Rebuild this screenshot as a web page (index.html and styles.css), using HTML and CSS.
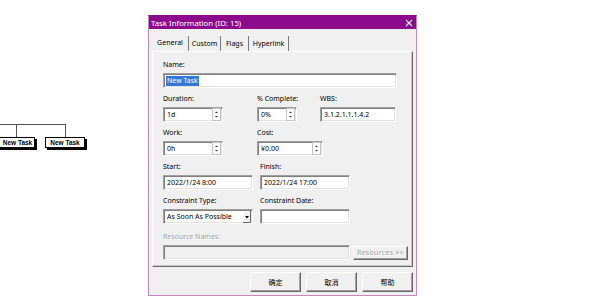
FILE: index.html
```html
<!DOCTYPE html>
<html>
<head>
<meta charset="utf-8">
<title>Task Information</title>
<link rel="stylesheet" href="styles.css">
</head>
<body>
<div class="org">
  <div class="hline"></div>
  <div class="nodes">
    <div class="node n1"><div class="vline"></div><div class="box">New Task</div></div>
    <div class="node n2"><div class="vline"></div><div class="box">New Task</div></div>
  </div>
</div>

<div class="dialog">
  <div class="titlebar">
    <span class="title">Task Information (ID: 15)</span>
    <svg class="close" width="8" height="8" viewBox="0 0 8 8"><path d="M1 1L7 7M7 1L1 7" stroke="#fff" stroke-width="1.1" fill="none"/></svg>
  </div>
  <div class="content">
    <div class="tabs">
      <div class="tab t1 active">General</div>
      <div class="tab t2">Custom</div>
      <div class="tab t3">Flags</div>
      <div class="tab t4">Hyperlink</div>
    </div>
    <div class="panel">
      <div class="fields">
        <div class="field">
          <label>Name:</label>
          <div class="input w234"><span class="sel">New Task</span></div>
        </div>

        <div class="row r-a">
          <div class="field">
            <label>Duration:</label>
            <div class="input w60"><span class="val">1d</span>
              <svg class="spinner" width="9" height="13" viewBox="0 0 9 13"><rect x="0.5" y="0.5" width="8" height="12" fill="#fcfcfc" stroke="#c4c4c4"/><path d="M3 5H6L4.5 3.5Z" fill="#333"/><path d="M3 8H6L4.5 9.5Z" fill="#333"/></svg>
            </div>
          </div>
          <div class="field">
            <label>% Complete:</label>
            <div class="input w40"><span class="val">0%</span>
              <svg class="spinner" width="9" height="13" viewBox="0 0 9 13"><rect x="0.5" y="0.5" width="8" height="12" fill="#fcfcfc" stroke="#c4c4c4"/><path d="M3 5H6L4.5 3.5Z" fill="#333"/><path d="M3 8H6L4.5 9.5Z" fill="#333"/></svg>
            </div>
          </div>
          <div class="field">
            <label>WBS:</label>
            <div class="input w76"><span class="val">3.1.2.1.1.1.4.2</span></div>
          </div>
        </div>

        <div class="row r-a">
          <div class="field">
            <label>Work:</label>
            <div class="input w60"><span class="val">0h</span>
              <svg class="spinner" width="9" height="13" viewBox="0 0 9 13"><rect x="0.5" y="0.5" width="8" height="12" fill="#fcfcfc" stroke="#c4c4c4"/><path d="M3 5H6L4.5 3.5Z" fill="#333"/><path d="M3 8H6L4.5 9.5Z" fill="#333"/></svg>
            </div>
          </div>
          <div class="field">
            <label>Cost:</label>
            <div class="input w65"><span class="val">¥0.00</span>
              <svg class="spinner" width="9" height="13" viewBox="0 0 9 13"><rect x="0.5" y="0.5" width="8" height="12" fill="#fcfcfc" stroke="#c4c4c4"/><path d="M3 5H6L4.5 3.5Z" fill="#333"/><path d="M3 8H6L4.5 9.5Z" fill="#333"/></svg>
            </div>
          </div>
        </div>

        <div class="row r-b">
          <div class="field">
            <label>Start:</label>
            <div class="input w90"><span class="val">2022/1/24 8:00</span></div>
          </div>
          <div class="field">
            <label>Finish:</label>
            <div class="input w90"><span class="val">2022/1/24 17:00</span></div>
          </div>
        </div>

        <div class="row r-b">
          <div class="field">
            <label>Constraint Type:</label>
            <div class="input w90 select"><span class="val">As Soon As Possible</span>
              <svg class="drop" width="8" height="12" viewBox="0 0 8 12"><rect x="0" y="0" width="8" height="12" fill="#f0f0f0"/><path d="M0 0.5H7.5V12M0.5 12V0.5" stroke="#fff" fill="none"/><path d="M7.5 0V11.5H0" stroke="#696969" fill="none"/><path d="M2 5H6L4 7.5Z" fill="#000"/></svg>
            </div>
          </div>
          <div class="field">
            <label>Constraint Date:</label>
            <div class="input w90"></div>
          </div>
        </div>

        <div class="row r-c">
          <div class="field">
            <label class="dis">Resource Names:</label>
            <div class="input w187 disabled"></div>
          </div>
          <div class="resbtn dis">Resources &gt;&gt;</div>
        </div>
      </div>
    </div>
    <div class="buttons">
      <div class="btn">确定</div>
      <div class="btn">取消</div>
      <div class="btn">帮助</div>
    </div>
  </div>
</div>
</body>
</html>
```

FILE: styles.css
```css
* { box-sizing: border-box; }
html, body { margin: 0; padding: 0; }
body {
  width: 600px;
  height: 297px;
  overflow: hidden;
  background: #fff;
  display: flex;
  align-items: flex-start;
  font-family: "Noto Sans", "Noto Sans CJK SC", sans-serif;
  font-size: 7px;
  color: #000;
}

/* org chart */
.org { width: 148px; flex: none; margin-top: 124px; }
.hline { width: 66px; height: 1px; background: #555; }
.nodes { display: flex; margin-left: -2px; }
.node { display: flex; flex-direction: column; align-items: center; }
.vline { width: 1px; height: 12px; background: #555; }
.box {
  height: 11px;
  border: 1px solid #000;
  box-shadow: 2px 2px 0 #000;
  background: #fff;
  font-family: "Liberation Sans", Arial, sans-serif;
  font-weight: bold;
  font-size: 6.5px;
  line-height: 9px;
  text-align: center;
  white-space: nowrap;
}
.n1 .box { width: 37px; padding-left: 2px; }
.n2 { margin-left: 10px; }
.n2 .box { width: 40px; }

/* dialog */
.dialog {
  flex: none;
  margin-top: 15px;
  width: 269px;
  height: 281px;
  background: #f0f0f0;
  border: 1px solid #c08ac0;
  border-top-color: #8c0a8c;
  display: flex;
  flex-direction: column;
}
.titlebar {
  height: 13px;
  background: #8c0a8c;
  color: #fff;
  font-size: 7.8px;
  display: flex;
  align-items: center;
  justify-content: space-between;
  padding: 0 3px 0 2px;
}
.close { display: block; }
.content {
  flex: 1;
  display: flex;
  flex-direction: column;
  padding: 7px 3px 3px;
}
.tabs { display: flex; height: 15px; }
.tab {
  line-height: 15px;
  text-align: center;
  border-right: 1px solid #7a7a7a;
  white-space: nowrap;
}
.t1 { width: 37px; }
.t2 { width: 32px; }
.t3 { width: 28px; }
.t4 { width: 40px; }
.tab.active { line-height: 14px; }

.panel {
  width: 261px;
  height: 216px;
  border-top: 1px solid #fff;
  border-left: 1px solid #fff;
  border-right: 1px solid #696969;
  border-bottom: 1px solid #696969;
  box-shadow: inset -1px -1px 0 #c8c8c8;
  padding: 7px 0 0 10px;
}
.fields { display: flex; flex-direction: column; gap: 5px; }
.field { display: flex; flex-direction: column; }
label { display: block; height: 11px; line-height: 11px; margin-bottom: 3px; white-space: nowrap; }
.dis { color: #a3a3a3; text-shadow: 1px 1px 0 #fff; }

.input {
  height: 15px;
  background: #fff;
  border: 1px solid;
  border-color: #a0a0a0 #fff #fff #a0a0a0;
  box-shadow: inset 1px 1px 0 #7f7f7f, inset -1px -1px 0 #e3e3e3;
  display: flex;
  align-items: center;
  padding: 0 1px 0 3px;
  white-space: nowrap;
  overflow: hidden;
}
.val { flex: 1; line-height: 11px; }
.sel {
  background: #3478d4;
  color: #fff;
  line-height: 10px;
  padding: 0 1px;
  margin-left: -1px;
}
.spinner { display: block; flex: none; margin-right: 0; }
.select { padding-right: 1px; }
.drop { display: block; flex: none; }
.disabled { background: #f0f0f0; }

.w234 { width: 234px; }
.w60 { width: 60px; }
.w40 { width: 40px; }
.w65 { width: 66px; }
.w76 { width: 76px; }
.w90 { width: 90px; }
.w187 { width: 187px; }

.row { display: grid; }
.r-a { grid-template-columns: 94px 63px auto; }
.r-b { grid-template-columns: 97px auto; }
.r-c { display: flex; align-items: flex-end; margin-top: 2px; }

.resbtn {
  margin-left: 3px;
  width: 55px;
  height: 14px;
  border: 1px solid;
  border-color: #fff #696969 #696969 #fff;
  box-shadow: inset -1px -1px 0 #a0a0a0;
  text-align: center;
  line-height: 12px;
  letter-spacing: 0.3px;
  white-space: nowrap;
}

.buttons {
  display: flex;
  justify-content: flex-end;
  gap: 5px;
  margin-top: 5px;
}
.btn {
  width: 51px;
  height: 20px;
  border: 1px solid;
  border-color: #fff #696969 #696969 #fff;
  box-shadow: inset -1px -1px 0 #a0a0a0;
  background: #f0f0f0;
  font-family: "Noto Sans CJK SC", sans-serif;
  font-size: 7px;
  line-height: 18px;
  text-align: center;
}
```
